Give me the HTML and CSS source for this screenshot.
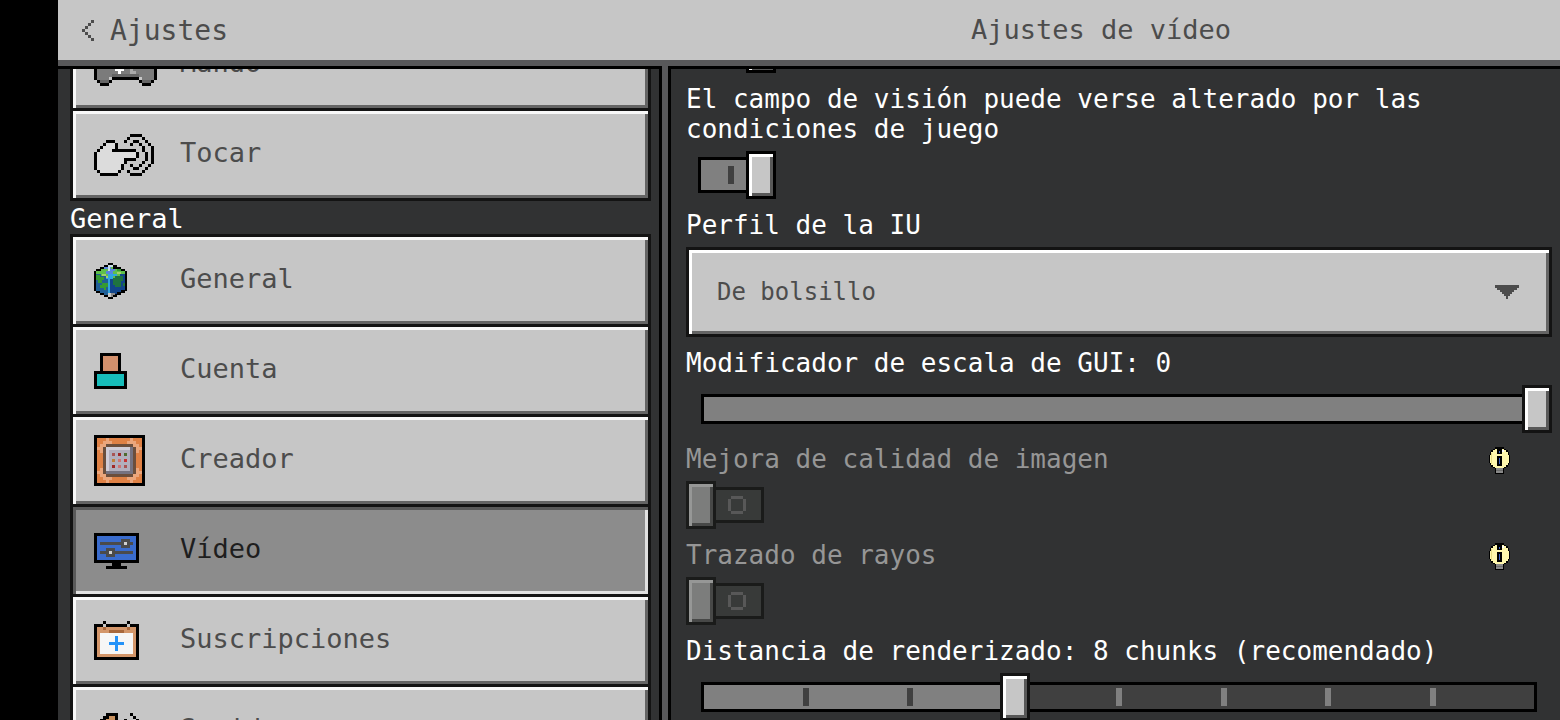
FILE: index.html
```html
<!DOCTYPE html>
<html lang="es">
<head>
  <meta charset="UTF-8">
  <title>Ajustes de vídeo</title>
  <link rel="stylesheet" href="styles.css">
</head>
<body>

<header>
  <button class="back">
    <svg width="12" height="21" viewBox="0 0 4 7" fill="#4c4c4c"><path d="M3 0h1v1H3zM2 1h1v1H2zM1 2h1v1H1zM0 3h1v1H0zM1 4h1v1H1zM2 5h1v1H2zM3 6h1v1H3z"/></svg>
    Ajustes
  </button>
  <h1>Ajustes de vídeo</h1>
</header>

<main>
  <nav>
    <div class="menu">
      <button class="item">
        <svg width="63" height="42" viewBox="0 0 21 14">
          <path fill="#7b7b7b" d="M1 3h19v9h-1v1h-3v-2H5v2H2v-1H1z"/>
          <path stroke="#666" d="M6 10.5h9M2 12.5h3M16 12.5h3"/>
          <path stroke="#fff" d="M7 8.5h3M8 9.5h1"/>
          <path stroke="#aaa" d="M12 8.5h1M12 9.5h2"/>
          <path stroke="#000" d="M3 2.5h15M0 7.5h1M0 8.5h1M0 9.5h1M0 10.5h1M0 11.5h1M6 11.5h9M20 11.5h1M20 7.5h1M20 8.5h1M20 9.5h1M20 10.5h1M1 12.5h1M5 12.5h1M15 12.5h1M19 12.5h1M2 13.5h3M16 13.5h3"/>
        </svg>
        <span>Mando</span>
      </button>
      <button class="item">
        <svg width="60" height="42" viewBox="0 0 20 14">
          <path fill="#dcdcdc" d="M4 3h3v2h-1v1h8v2h-4v2H9v2H8v1H2v-1H1V6h1V5h1V4h1z"/>
          <path stroke="#000" d="M12 .5h4M11 1.5h1M16 1.5h1M4 2.5h3M10 2.5h1M13 2.5h2M17 2.5h1M3 3.5h1M7 3.5h1M12 3.5h1M15 3.5h1M18 3.5h1M2 4.5h1M7 4.5h1M16 4.5h1M19 4.5h1M1 5.5h1M6 5.5h8M16 5.5h1M19 5.5h1M0 6.5h1M14 6.5h1M17 6.5h1M19 6.5h1M0 7.5h1M14 7.5h1M17 7.5h1M19 7.5h1M0 8.5h1M10 8.5h4M17 8.5h1M19 8.5h1M0 9.5h1M10 9.5h1M16 9.5h1M19 9.5h1M0 10.5h1M9 10.5h1M12 10.5h1M15 10.5h1M18 10.5h1M0 11.5h1M9 11.5h1M13 11.5h2M17 11.5h1M1 12.5h1M8 12.5h1M11 12.5h1M16 12.5h1M2 13.5h6M12 13.5h4"/>
        </svg>
        <span>Tocar</span>
      </button>

      <h2>General</h2>

      <button class="item">
        <svg width="33" height="36" viewBox="0 0 33 36">
          <path d="M14 0h5v2h4v2h4v2h4v2h2v20h-2v2h-4v2h-4v2h-4v2h-5v-2h-4v-2H6v-2H2v-2H0V8h2V6h4V4h4V2h4z"/>
          <path fill="#1f5f96" d="M2 9h14v23h-6v-2H6v-2H2z"/>
          <path fill="#12458a" d="M16 9h15v18h-4v2h-4v2h-7z"/>
          <path fill="#5fc04a" d="M14 4h5v2h4v2h8v3h-5v2h-5v2h-9v-2H7v-2H2V8h5V6h7z"/>
          <path fill="#5585dd" d="M14 3h3v3h4v2h-2v3h-7V8h2V6h-4V4h4z"/>
          <path fill="#c8dce6" d="M14 2h5v2h-5zM14 4h2v4h-2z"/>
          <path fill="#2fa5e0" d="M14 11h9v2h-4v3h-3v14h-2V16h-2v-2h2z"/>
          <path fill="#a5d069" d="M8 11h4v2H8zM23 9h4v2h-4zM12 13h2v2h-2z"/>
          <path fill="#359b33" d="M2 12h4v2h4v3H8v3H4v-3H2zM6 22h2v-2h6v4h-2v3h-2v-2H6zM23 6h4v2h-4z"/>
          <path fill="#1f733f" d="M19 15h2v-2h8v5h-2v6h-6v-2h-2zM29 20h2v3h-2z"/>
          <path fill="#c8c8c8" d="M14 30h3v4h-3z"/><path fill="#888" d="M17 30h4v2h-2v2h-2z"/>
        </svg>
        <span>General</span>
      </button>
      <button class="item">
        <svg width="33" height="36" viewBox="0 0 11 12">
          <path d="M2 0h7v6h2v6H0V6h2z"/>
          <path fill="#d3906c" d="M3 1h5v5H3z"/>
          <path fill="#17bdba" d="M1 7h9v4H1z"/>
        </svg>
        <span>Cuenta</span>
      </button>
      <button class="item">
        <svg width="51" height="51" viewBox="0 0 17 17">
          <path d="M0 0h17v17H0z"/>
          <path fill="#df8145" d="M1 1h15v15H1z"/>
          <path stroke="#eba67c" d="M4 1.5h1M12 1.5h1M3 2.5h3M11 2.5h3M2 3.5h2M13 3.5h2M1 4.5h2M14 4.5h2M2 5.5h1M14 5.5h1M2 11.5h1M14 11.5h1M1 12.5h2M14 12.5h2M2 13.5h2M13 13.5h2M3 14.5h3M11 14.5h3M4 15.5h1M12 15.5h1"/>
          <path fill="#6b4e3c" d="M4 3h9v1h1v9h-1v1H4v-1H3V4h1z"/>
          <path fill="#d0cdd8" d="M4 4h9v9H4z"/>
          <path fill="#757280" d="M12 4h1v9H4v-1h8z"/>
          <path fill="#b2afbd" d="M5 5h7v7H5z"/>
          <path stroke="#a85454" d="M6 6.5h1M10 10.5h1"/>
          <path stroke="#a02828" d="M8 6.5h1M6 10.5h1"/>
          <path stroke="#4f6b30" d="M10 6.5h1"/>
          <path stroke="#c08038" d="M6 8.5h1"/>
          <path stroke="#cd7474" d="M8 8.5h1M8 10.5h1"/>
          <path stroke="#c83434" d="M10 8.5h1"/>
        </svg>
        <span>Creador</span>
      </button>
      <button class="item active">
        <svg width="45" height="36" viewBox="0 0 15 12">
          <path d="M0 0h15v10H9v1h2v1H4v-1h2v-1H0z"/>
          <path fill="#3a6ccd" d="M1 1h13v8H1z"/>
          <path fill="#4b4b4b" d="M2 3h7V2h3v1h1v1h-1v1H9V4H2zM2 6h2V5h3v1h6v1H7v1H4V7H2z"/>
          <path stroke="#d0d0d0" d="M10 3.5h1M5 6.5h1"/>
        </svg>
        <span>Vídeo</span>
      </button>
      <button class="item">
        <svg width="45" height="39" viewBox="0 0 15 13">
          <path d="M3 0h1v1h7V0h1v1h3v12H0V1h3z"/>
          <path fill="#d3966a" d="M1 2h13v10H1z"/>
          <path stroke="#c6c6c6" d="M3 1.5h1M11 1.5h1"/>
          <path stroke="#a8683c" d="M3 2.5h1M11 2.5h1M5 3.5h5"/>
          <path fill="#f6f6f6" d="M2 4h11v7H2z"/>
          <path fill="#2492f8" d="M7 5h1v2h2v1H8v2H7V8H5V7h2z"/>
        </svg>
        <span>Suscripciones</span>
      </button>
      <button class="item">
        <svg width="45" height="36" viewBox="0 0 15 12">
          <path fill="#c9925f" d="M5 1h2v10H5L1 8V4h1l2-2z"/>
          <path stroke="#000" d="M4 .5h4M3 1.5h2M7 1.5h1M2 2.5h2M7 2.5h1M0 3.5h3M7 3.5h1M0 8.5h3M7 8.5h1M2 9.5h2M7 9.5h1M3 10.5h2M7 10.5h1M4 11.5h4M12 .5h1M13 1.5h1M10 2.5h1M14 2.5h1M11 3.5h1M14 3.5h1"/>
        </svg>
        <span>Sonido</span>
      </button>
    </div>
  </nav>

  <section>
    <form class="options">
      <div class="option">
        <input type="checkbox" class="toggle" aria-label="Opción anterior" checked>
      </div>

      <div class="option">
        <label for="fov">El campo de visión puede verse alterado por las condiciones de juego</label>
        <input type="checkbox" class="toggle" id="fov" checked>
      </div>

      <div class="option">
        <label for="profile">Perfil de la IU</label>
        <div class="dropdown">
          <select id="profile">
            <option>De bolsillo</option>
            <option>Clásico</option>
          </select>
          <svg width="24" height="14" viewBox="0 0 24 14"><path fill="#4c4c4c" d="M0 0h24v3h-2v2h-3v2h-2v2h-2v2h-2v3h-2v-3H9V9H7V7H5V5H2V3H0z"/></svg>
        </div>
      </div>

      <div class="option">
        <label for="scale">Modificador de escala de GUI: 0</label>
        <div class="slider">
          <div class="track"><div class="fill" style="width: 100%"></div></div>
          <input type="range" id="scale" min="-2" max="0" value="0">
        </div>
      </div>

      <div class="option disabled">
        <div class="row">
          <label for="upscaling">Mejora de calidad de imagen</label>
          <svg width="21" height="27" viewBox="0 0 21 27">
            <path d="M6 0h9v2h2v1h2v2h1v3h1v8h-1v2h-1v2h-2v1h-2v6H6v-6H4v-1H2v-2H1v-2H0V8h1V5h1V3h2V2h2z"/>
            <path fill="#fff8ad" d="M6 2h9v1h2v2h2v3h1v8h-1v2h-2v2h-2v1H6v-1H4v-2H2v-2H1V8h1V5h2V3h2z"/>
            <path fill="#e6dd83" d="M2 6h1v11H2z"/>
            <path fill="#fff" d="M13 3h2v2h-2z"/>
            <path d="M8 2h5v5H8zM8 9h5v10H8z"/>
            <path fill="#3c63c8" d="M10 4h1v2h-1zM10 11h1v6h-1z"/>
            <path fill="#8a8a8a" d="M7 21h7v5H7z"/><path fill="#6c6c6c" d="M7 23h7v1H7z"/>
          </svg>
        </div>
        <input type="checkbox" class="toggle" id="upscaling" disabled>
      </div>

      <div class="option disabled">
        <div class="row">
          <label for="raytracing">Trazado de rayos</label>
          <svg width="21" height="27" viewBox="0 0 21 27">
            <path d="M6 0h9v2h2v1h2v2h1v3h1v8h-1v2h-1v2h-2v1h-2v6H6v-6H4v-1H2v-2H1v-2H0V8h1V5h1V3h2V2h2z"/>
            <path fill="#fff8ad" d="M6 2h9v1h2v2h2v3h1v8h-1v2h-2v2h-2v1H6v-1H4v-2H2v-2H1V8h1V5h2V3h2z"/>
            <path fill="#e6dd83" d="M2 6h1v11H2z"/>
            <path fill="#fff" d="M13 3h2v2h-2z"/>
            <path d="M8 2h5v5H8zM8 9h5v10H8z"/>
            <path fill="#3c63c8" d="M10 4h1v2h-1zM10 11h1v6h-1z"/>
            <path fill="#8a8a8a" d="M7 21h7v5H7z"/><path fill="#6c6c6c" d="M7 23h7v1H7z"/>
          </svg>
        </div>
        <input type="checkbox" class="toggle" id="raytracing" disabled>
      </div>

      <div class="option">
        <label for="distance">Distancia de renderizado: 8 chunks (recomendado)</label>
        <div class="slider">
          <div class="track"><div class="fill" style="width: 37.5%"></div></div>
          <div class="ticks">
            <i class="passed"></i><i class="passed"></i><i class="passed"></i><i></i><i></i><i></i><i></i>
          </div>
          <input type="range" id="distance" min="0" max="8" value="3">
        </div>
      </div>
    </form>
  </section>
</main>

</body>
</html>
```
FILE: styles.css
```css
*, *::before, *::after {
  box-sizing: border-box;
}

body {
  margin: 0;
  height: 100vh;
  padding-left: 58px;
  display: flex;
  flex-direction: column;
  overflow: hidden;
  background: #000;
  color: #fff;
  font-family: "DejaVu Sans Mono", monospace;
  font-size: 26px;
  line-height: 30px;
}

svg {
  display: block;
  flex: none;
  shape-rendering: crispEdges;
}

button, select {
  font-family: inherit;
  color: #4c4c4c;
  cursor: pointer;
}

header {
  display: flex;
  flex: none;
  height: 66px;
  background: #c6c6c6;
  border-bottom: 6px solid #58585a;
  color: #4c4c4c;
}

.back {
  display: flex;
  align-items: center;
  gap: 16px;
  width: 604px;
  padding: 0 24px;
  border: none;
  background: none;
  font-size: 28px;
}

header h1 {
  flex: 1;
  margin: 0;
  padding-right: 20px;
  font-size: 27px;
  font-weight: normal;
  line-height: 60px;
  text-align: center;
}

main {
  display: flex;
  flex: 1;
  min-height: 0;
  background: #58585a;
  gap: 6px;
}

nav, section {
  overflow: hidden;
  background: #313233;
  border-top: 3px solid #000;
}

nav {
  flex: none;
  width: 604px;
  border-right: 3px solid #000;
}

section {
  flex: 1;
  border-left: 3px solid #000;
}

/* left menu, scrolled down a bit */
.menu {
  display: flex;
  flex-direction: column;
  margin-top: -51px;
  padding: 0 8px 0 12px;
}

.menu h2 {
  margin: 0;
  height: 36px;
  padding-top: 3px;
  font-size: 27px;
  font-weight: normal;
  line-height: 36px;
}

.item {
  display: grid;
  flex: none;
  grid-template-columns: 86px 1fr;
  align-items: center;
  height: 93px;
  margin-bottom: -3px;
  padding: 0 21px;
  border: 3px solid #131313;
  background: #c6c6c6;
  box-shadow: inset 3px 3px #f8f8f8, inset -3px -3px #646464;
  font-size: 27px;
  text-align: left;
}

.item span {
  padding-bottom: 4px;
}

.item.active {
  background: #8c8c8c;
  box-shadow: inset 3px 3px #5a5a5a, inset -3px -3px #e0e0e0;
  color: #1e1e1e;
}

/* right panel */
.options {
  display: flex;
  flex-direction: column;
  gap: 11px;
  margin-top: -44px;
  padding: 0 8px 0 15px;
}

.option {
  display: flex;
  flex: none;
  flex-direction: column;
  gap: 7px;
}

.option.disabled {
  color: #969696;
}

.row {
  display: flex;
  justify-content: space-between;
  align-items: flex-end;
  height: 30px;
  padding-right: 42px;
}

.toggle {
  appearance: none;
  position: relative;
  width: 66px;
  height: 36px;
  margin: 6px 12px;
  border: 3px solid #000;
  background: #404040;
}

.toggle:checked {
  background: #808080;
}

.toggle::before {
  content: "";
  position: absolute;
  top: -9px;
  left: -15px;
  width: 30px;
  height: 48px;
  border: 3px solid #000;
  background: #c6c6c6;
  box-shadow: inset 3px 3px #fff, inset -3px -3px #585858;
}

.toggle:checked::before {
  left: 45px;
}

/* "O" mark when off, "I" mark when on */
.toggle::after {
  content: "";
  position: absolute;
  top: 9px;
  left: 30px;
  width: 12px;
  height: 12px;
  color: #585858;
  box-shadow: 0 -3px, 3px 0, 0 3px, -3px 0;
}

.toggle:checked::after {
  top: 6px;
  left: 27px;
  width: 6px;
  height: 18px;
  background: #404040;
  box-shadow: none;
}

.toggle:disabled {
  border-color: #1a1b1a;
  background: #383a39;
}

.toggle:disabled::before {
  border-color: #1a1b1a;
  background: #7c7d7c;
  box-shadow: inset 3px 3px #969796, inset -3px -3px #474847;
}

.dropdown {
  display: grid;
  align-items: center;
}

.dropdown select, .dropdown svg {
  grid-area: 1 / 1;
}

.dropdown svg {
  justify-self: end;
  margin-right: 33px;
  pointer-events: none;
}

select {
  appearance: none;
  width: 100%;
  height: 90px;
  padding: 0 28px;
  border: 3px solid #131313;
  border-radius: 0;
  background: #c6c6c6;
  box-shadow: inset 3px 3px #fff, inset -3px -3px #646464;
  font-size: 24px;
}

.slider {
  display: grid;
  align-items: center;
}

.track, .ticks, .slider input {
  grid-area: 1 / 1;
}

.track {
  height: 30px;
  margin: 0 15px;
  border: 3px solid #000;
  background: #404040;
}

.fill {
  height: 100%;
  background: #808080;
}

.ticks {
  display: flex;
  justify-content: space-evenly;
  margin: 0 18px;
}

.ticks i {
  width: 6px;
  height: 18px;
  background: #808080;
}

.ticks .passed {
  background: #404040;
}

.slider input {
  appearance: none;
  width: 100%;
  height: 48px;
  margin: 0;
  background: none;
}

.slider input::-webkit-slider-thumb {
  appearance: none;
  width: 30px;
  height: 48px;
  border: 3px solid #131313;
  background: #c6c6c6;
  box-shadow: inset 3px 3px #fff, inset -3px -3px #585858;
}
```
